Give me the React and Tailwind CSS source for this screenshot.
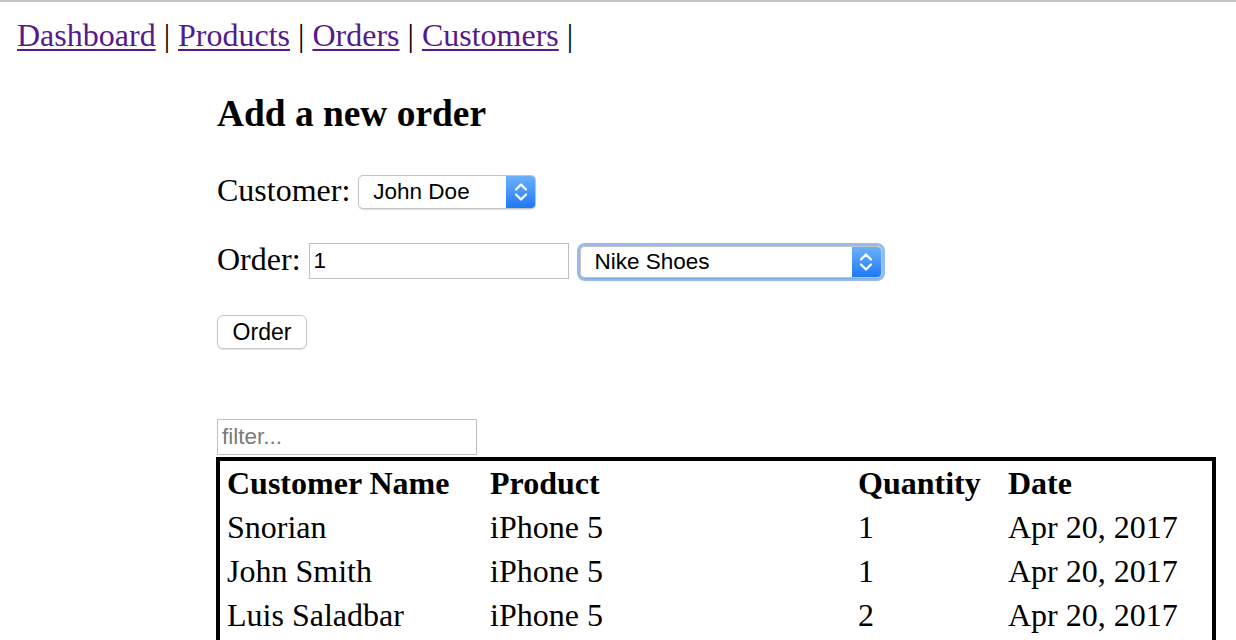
import React from "react";

const NAV = ["Dashboard", "Products", "Orders", "Customers"];

const ROWS = [
  { name: "Snorian", product: "iPhone 5", qty: 1, date: "Apr 20, 2017" },
  { name: "John Smith", product: "iPhone 5", qty: 1, date: "Apr 20, 2017" },
  { name: "Luis Saladbar", product: "iPhone 5", qty: 2, date: "Apr 20, 2017" },
];

function Chevrons() {
  return (
    <svg width="16" height="22" viewBox="0 0 16 22" fill="none" stroke="white" strokeWidth="2.2" strokeLinecap="round" strokeLinejoin="round">
      <path d="M3 8.5 L8 3.5 L13 8.5" />
      <path d="M3 13.5 L8 18.5 L13 13.5" />
    </svg>
  );
}

// mac-style popup select, drawn with divs
function FakeSelect({ value, width, height, focused }) {
  const box = (
    <div
      className="flex items-stretch overflow-hidden rounded-[5px] border border-[#c4c4c4] bg-white font-['Liberation_Sans',sans-serif] shadow-[0_1px_1px_rgba(0,0,0,0.12)]"
      style={{ width, height }}
    >
      <div className="flex flex-1 items-center pl-[14px] text-[22.5px] text-black">{value}</div>
      <div className="flex w-[29px] items-center justify-center bg-gradient-to-b from-[#6ab0fb] to-[#1b78f6]">
        <Chevrons />
      </div>
    </div>
  );
  if (!focused) return box;
  return <div className="rounded-[8px] border-[3px] border-[#93bcf3]">{box}</div>;
}

export default function App() {
  return (
    <div className="min-h-screen bg-white font-['Liberation_Serif',serif] text-black">
      <div className="h-[2px] bg-[#c4c4c4]" />

      {/* nav */}
      <nav className="mt-[15px] pl-[17px] text-[32px] leading-[36px]">
        {NAV.map((n) => (
          <React.Fragment key={n}>
            <a href="#" className="text-[#551a8b] underline decoration-2 underline-offset-[3px]">
              {n}
            </a>{" "}
            |{" "}
          </React.Fragment>
        ))}
      </nav>

      <div className="w-[1216px] pl-[216px]">
        <h3 className="mt-[39px] pl-[1px] text-[37.4px] font-bold leading-[44px]">Add a new order</h3>

        {/* customer */}
        <div className="mt-[39px] flex h-[34px] items-start pl-[1px]">
          <span className="text-[32px] leading-[30px]">Customer:</span>
          <div className="ml-[8px]">
            <FakeSelect value="John Doe" width={178} height={34} />
          </div>
        </div>

        {/* order */}
        <div className="mt-[34px] flex h-[38px] items-start pl-[1px]">
          <span className="text-[32px] leading-[32px]">Order:</span>
          <div className="ml-[8px] flex h-[36px] w-[260px] items-center border border-[#bfbfbf] pl-[4px] font-['Liberation_Sans',sans-serif] text-[22.5px]">
            1
          </div>
          <div className="ml-[8px]">
            <FakeSelect value="Nike Shoes" width={302} height={32} focused />
          </div>
        </div>

        <button className="mt-[34px] ml-[1px] flex h-[34px] w-[90px] items-center justify-center rounded-[6px] border border-[#c8c8c8] bg-white font-['Liberation_Sans',sans-serif] text-[23px] shadow-[0_1px_1px_rgba(0,0,0,0.12)]">
          Order
        </button>

        {/* filter */}
        <div className="mt-[70px] ml-[1px] flex h-[36px] w-[260px] items-center border border-[#bfbfbf] pl-[4px] font-['Liberation_Sans',sans-serif] text-[22.5px] text-[#7a7a7a]">
          filter...
        </div>

        {/* table */}
        <div className="mt-[2px] w-[1000px] border-4 border-black pb-[40px]">
          <div className="grid grid-cols-[263px_368px_150px_1fr] text-[32px] leading-[44px]">
            {["Customer Name", "Product", "Quantity", "Date"].map((h) => (
              <div key={h} className="pl-[7px] font-bold">
                {h}
              </div>
            ))}
            {ROWS.map((r) => (
              <React.Fragment key={r.name}>
                <div className="pl-[7px]">{r.name}</div>
                <div className="pl-[7px]">{r.product}</div>
                <div className="pl-[7px]">{r.qty}</div>
                <div className="pl-[7px]">{r.date}</div>
              </React.Fragment>
            ))}
          </div>
        </div>
      </div>
    </div>
  );
}
